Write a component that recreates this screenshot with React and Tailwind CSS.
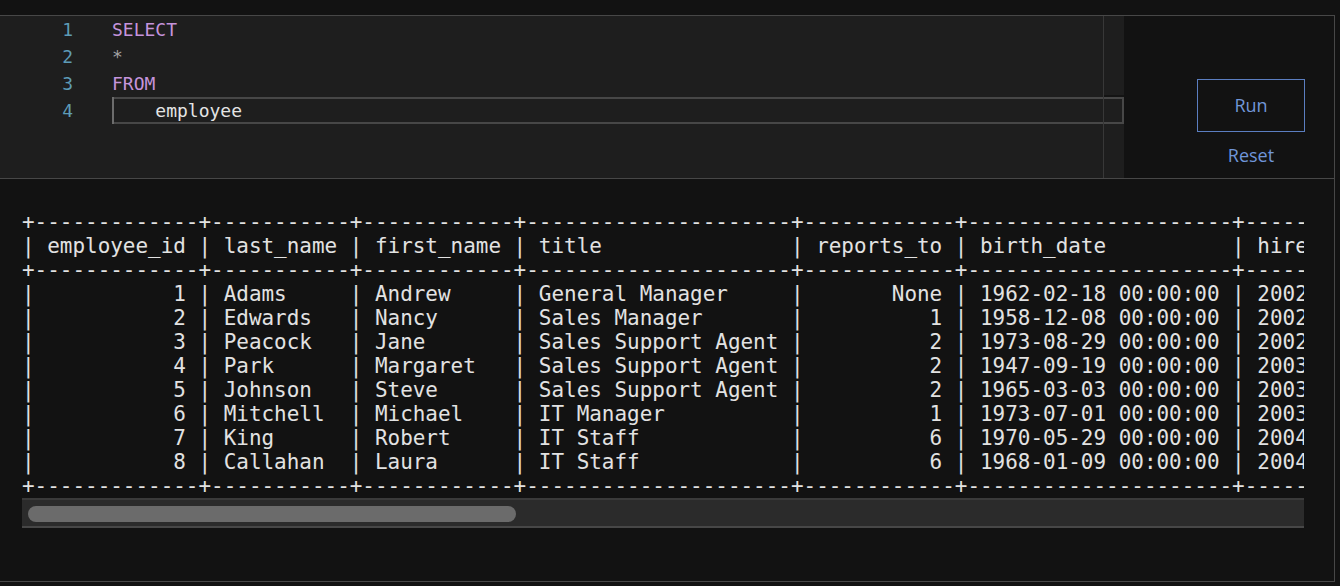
const columns = [
  { name: 'employee_id', right: true },
  { name: 'last_name' },
  { name: 'first_name' },
  { name: 'title' },
  { name: 'reports_to', right: true },
  { name: 'birth_date' },
  { name: 'hire_date' },
  { name: 'address' },
  { name: 'city' },
  { name: 'state' },
  { name: 'country' },
  { name: 'postal_code' },
  { name: 'phone' },
  { name: 'fax' },
  { name: 'email' },
];

const rows = [
  ['1', 'Adams', 'Andrew', 'General Manager', 'None', '1962-02-18 00:00:00', '2002-08-14 00:00:00', '11120 Jasper Ave NW', 'Edmonton', 'AB', 'Canada', 'T5K 2N1', '+1 (780) 428-9482', '+1 (780) 428-3457', 'andrew@chinookcorp.com'],
  ['2', 'Edwards', 'Nancy', 'Sales Manager', '1', '1958-12-08 00:00:00', '2002-05-01 00:00:00', '825 8 Ave SW', 'Calgary', 'AB', 'Canada', 'T2P 2T3', '+1 (403) 262-3443', '+1 (403) 262-3322', 'nancy@chinookcorp.com'],
  ['3', 'Peacock', 'Jane', 'Sales Support Agent', '2', '1973-08-29 00:00:00', '2002-04-01 00:00:00', '1111 6 Ave SW', 'Calgary', 'AB', 'Canada', 'T2P 5M5', '+1 (403) 262-3443', '+1 (403) 262-6712', 'jane@chinookcorp.com'],
  ['4', 'Park', 'Margaret', 'Sales Support Agent', '2', '1947-09-19 00:00:00', '2003-05-03 00:00:00', '683 10 Street SW', 'Calgary', 'AB', 'Canada', 'T2P 5G3', '+1 (403) 263-4423', '+1 (403) 263-4289', 'margaret@chinookcorp.com'],
  ['5', 'Johnson', 'Steve', 'Sales Support Agent', '2', '1965-03-03 00:00:00', '2003-10-17 00:00:00', '7727B 41 Ave', 'Calgary', 'AB', 'Canada', 'T3B 1Y7', '1 (780) 836-9987', '1 (780) 836-9543', 'steve@chinookcorp.com'],
  ['6', 'Mitchell', 'Michael', 'IT Manager', '1', '1973-07-01 00:00:00', '2003-10-17 00:00:00', '5827 Bowness Road NW', 'Calgary', 'AB', 'Canada', 'T3B 0C5', '+1 (403) 246-9887', '+1 (403) 246-9899', 'michael@chinookcorp.com'],
  ['7', 'King', 'Robert', 'IT Staff', '6', '1970-05-29 00:00:00', '2004-01-02 00:00:00', '590 Columbia Boulevard West', 'Lethbridge', 'AB', 'Canada', 'T1K 5N8', '+1 (403) 456-9986', '+1 (403) 456-8485', 'robert@chinookcorp.com'],
  ['8', 'Callahan', 'Laura', 'IT Staff', '6', '1968-01-09 00:00:00', '2004-03-04 00:00:00', '923 7 ST NW', 'Lethbridge', 'AB', 'Canada', 'T1H 1Y8', '+1 (403) 467-3351', '+1 (403) 467-8772', 'laura@chinookcorp.com'],
];

function buildTable() {
  const widths = columns.map((c, i) => Math.max(c.name.length, ...rows.map((r) => r[i].length)));
  const sep = '+' + widths.map((w) => '-'.repeat(w + 2)).join('+') + '+';
  const header = '| ' + columns.map((c, i) => c.name.padEnd(widths[i])).join(' | ') + ' |';
  const body = rows.map(
    (r) => '| ' + r.map((v, i) => (columns[i].right ? v.padStart(widths[i]) : v.padEnd(widths[i]))).join(' | ') + ' |'
  );
  return [sep, header, sep, ...body, sep].join('\n');
}

const code = [
  { n: 1, text: 'SELECT', cls: 'text-[#c594dc]' },
  { n: 2, text: '*', cls: 'text-[#a3a3a3]' },
  { n: 3, text: 'FROM', cls: 'text-[#c594dc]' },
  { n: 4, text: '    employee', cls: 'text-[#e4e4e4]', active: true },
];

function Editor() {
  return (
    <div className="relative w-[1124px] bg-[#1e1e1e]">
      {/* 右侧滚动条槽 */}
      <div className="absolute right-0 top-0 bottom-0 w-[21px] border-l border-[#383838]">
        <div className="mt-[79px] h-[2px] bg-[#141414]" />
      </div>
      <div className="font-['DejaVu_Sans_Mono',monospace] text-[18px] leading-[27px]">
        {code.map((line) => (
          <div key={line.n} className="flex h-[27px]">
            <div className="w-[73px] text-right text-[#5d9bb6]">{line.n}</div>
            <div
              className={
                'ml-[39px] flex-1 whitespace-pre ' +
                line.cls +
                (line.active ? ' shadow-[inset_2px_0_0_#6c6c6c,inset_0_0_0_2px_#474747]' : '')
              }
            >
              {line.text}
            </div>
          </div>
        ))}
      </div>
    </div>
  );
}

function Controls() {
  return (
    <div className="flex flex-1 justify-end pr-[29px] bg-[#121212]">
      <div className="flex flex-col items-center pt-[63px] font-['Open_Sans',sans-serif]">
        <button className="w-[108px] h-[53px] border border-[#5b7ec0] text-[18px] text-[#7196d8]">Run</button>
        <span className="mt-[10px] text-[18px] leading-[26px] text-[#6f95d9]">Reset</span>
      </div>
    </div>
  );
}

function Output() {
  return (
    <div className="flex-1 pl-[22px] pt-[31px]">
      <div className="w-[1282px] overflow-hidden">
        <pre className="font-['DejaVu_Sans_Mono',monospace] text-[20.95px] leading-[24px] text-[#e2e2e2]">
          {buildTable()}
        </pre>
      </div>
      <div className="w-[1282px] h-[30px] bg-[#2b2b2b] border-t-2 border-b-2 border-t-[#3a3a3a] border-b-[#474747] pt-[6px] pl-[6px]">
        <div className="w-[488px] h-[16px] rounded-full bg-[#6b6b6b]" />
      </div>
    </div>
  );
}

export default function App() {
  return (
    <div className="min-h-screen bg-[#121212] pt-[15px]">
      <div className="w-[1335px] h-[567px] border-t border-r border-b border-[#474747] flex flex-col">
        <div className="h-[163px] flex border-b border-[#474747]">
          <Editor />
          <Controls />
        </div>
        <Output />
      </div>
    </div>
  );
}
